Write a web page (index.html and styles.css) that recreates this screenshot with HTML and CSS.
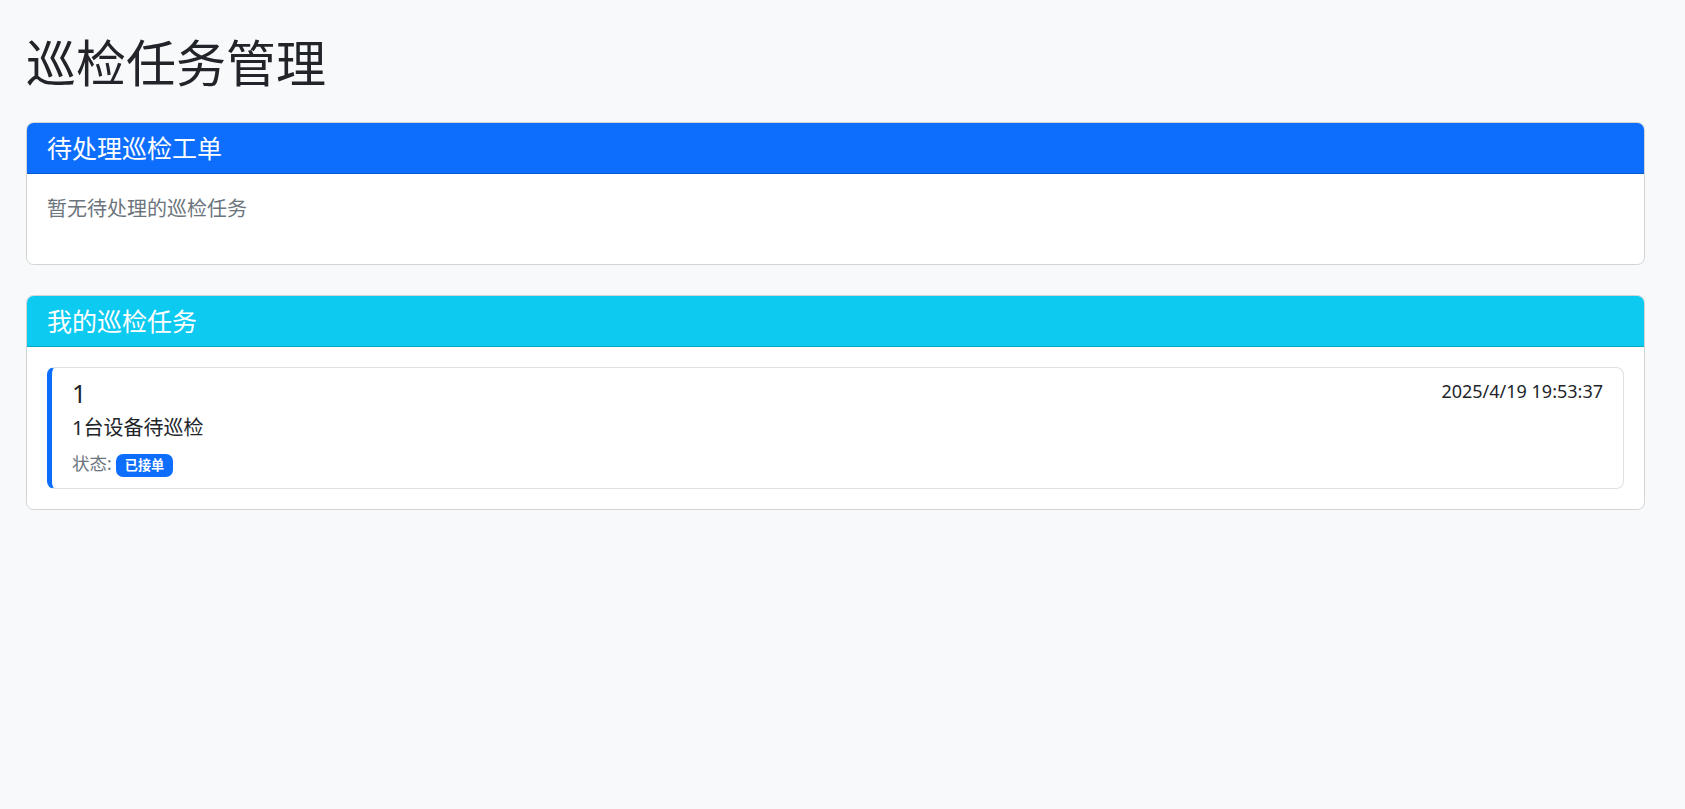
FILE: index.html
```html
<!DOCTYPE html>
<html lang="zh-CN">
<head>
<meta charset="utf-8">
<title>巡检任务管理</title>
<link rel="stylesheet" href="styles.css">
</head>
<body>
<main class="page">
  <h1 class="page-title">巡检任务管理</h1>

  <section class="card">
    <header class="card-header header-primary">
      <h5 class="card-title">待处理巡检工单</h5>
    </header>
    <div class="card-body">
      <p class="muted empty">暂无待处理的巡检任务</p>
    </div>
  </section>

  <section class="card">
    <header class="card-header header-info">
      <h5 class="card-title">我的巡检任务</h5>
    </header>
    <div class="card-body">
      <div class="task-item">
        <div class="task-top">
          <h5 class="task-title">1</h5>
          <small class="task-time">2025/4/19 19:53:37</small>
        </div>
        <p class="task-desc">1台设备待巡检</p>
        <small class="muted">状态: <span class="badge">已接单</span></small>
      </div>
    </div>
  </section>
</main>
</body>
</html>
```

FILE: styles.css
```css
* { box-sizing: border-box; }

html, body {
  margin: 0;
  padding: 0;
}

body {
  background: #f8f9fa;
  color: #212529;
  font-family: "Noto Sans", "Noto Sans CJK SC", sans-serif;
  font-size: 20px;
  line-height: 1.5;
}

.page {
  padding: 33px 40px 30px 26px;
}

.page-title {
  margin: 0 0 29px;
  font-size: 50px;
  font-weight: 400;
  line-height: 1.2;
  color: #212529;
}

.card {
  background: #fff;
  border: 1px solid #d3d4d5;
  border-radius: 7.5px;
  margin-bottom: 30px;
  overflow: hidden;
}

.card-header {
  padding: 10px 20px;
  border-bottom: 1px solid rgba(0, 0, 0, 0.175);
  color: #fff;
}

.header-primary { background: #0d6efd; }
.header-info { background: #0dcaf0; }

.card-title {
  margin: 0;
  font-size: 25px;
  font-weight: 400;
  line-height: 1.2;
}

.card-body {
  padding: 20px;
}

.muted { color: #6c757d; }

.empty {
  margin: 0 0 20px;
}

.task-item {
  border: 1px solid #dfe1e4;
  border-left: 5px solid #0d6efd;
  border-radius: 7.5px;
  padding: 10px 20px;
}

.task-top {
  display: flex;
  justify-content: space-between;
}

.task-title {
  margin: 0 0 5px;
  font-size: 25px;
  font-weight: 400;
  line-height: 1.2;
}

.task-time {
  font-size: 18px;
  line-height: 26px;
}

.task-desc {
  margin: 0 0 5px;
}

small { font-size: 17.5px; }

.badge {
  display: inline-block;
  padding: 0.35em 0.65em;
  font-size: 0.75em;
  font-weight: 700;
  line-height: 1;
  color: #fff;
  background: #0d6efd;
  border-radius: 7px;
  vertical-align: baseline;
  white-space: nowrap;
}
```
